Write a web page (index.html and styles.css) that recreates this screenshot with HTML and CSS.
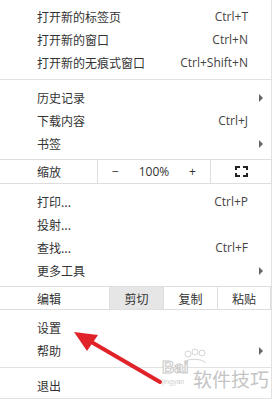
FILE: index.html
```html
<!DOCTYPE html>
<html lang="zh-CN">
<head>
    <meta charset="UTF-8">
    <meta name="viewport" content="width=device-width, initial-scale=1.0">
    <title>菜单</title>
    <link rel="stylesheet" href="styles.css">
</head>
<body>
    <div class="menu">
        <div class="group">
            <div class="item"><span class="label">打开新的标签页</span><span class="key">Ctrl+T</span></div>
            <div class="item"><span class="label">打开新的窗口</span><span class="key">Ctrl+N</span></div>
            <div class="item"><span class="label">打开新的无痕式窗口</span><span class="key">Ctrl+Shift+N</span></div>
        </div>
        <div class="sep"></div>
        <div class="group">
            <div class="item"><span class="label">历史记录</span><span class="sub"></span></div>
            <div class="item"><span class="label">下载内容</span><span class="key">Ctrl+J</span></div>
            <div class="item"><span class="label">书签</span><span class="sub"></span></div>
        </div>

        <!-- 缩放 -->
        <div class="box-row zoom-row">
            <div class="box-label">缩放</div>
            <div class="zoom-ctrl">
                <span>−</span>
                <span>100%</span>
                <span>+</span>
            </div>
            <div class="zoom-full">
                <svg width="13" height="11" viewBox="0 0 13 11">
                    <path d="M1 4V1h4M8 1h4v3M12 7v3H8M5 10H1V7" fill="none" stroke="#222" stroke-width="2"/>
                </svg>
            </div>
        </div>

        <div class="group">
            <div class="item"><span class="label">打印...</span><span class="key">Ctrl+P</span></div>
            <div class="item"><span class="label">投射...</span></div>
            <div class="item"><span class="label">查找...</span><span class="key">Ctrl+F</span></div>
            <div class="item"><span class="label">更多工具</span><span class="sub"></span></div>
        </div>

        <!-- 编辑 -->
        <div class="box-row edit-row">
            <div class="box-label edit-label">编辑</div>
            <div class="edit-btn active">剪切</div>
            <div class="edit-btn">复制</div>
            <div class="edit-btn">粘贴</div>
        </div>

        <div class="group">
            <div class="item"><span class="label">设置</span></div>
            <div class="item"><span class="label">帮助</span><span class="sub"></span></div>
        </div>
        <div class="sep"></div>
        <div class="group">
            <div class="item"><span class="label">退出</span></div>
        </div>
    </div>

    <!-- 水印 -->
    <div class="watermark">
        <svg class="paw" width="36" height="16" viewBox="0 0 36 16">
            <g fill="none" stroke="#d4d4d4" stroke-width="1">
                <circle cx="8" cy="6" r="3"/>
                <circle cx="15" cy="4" r="3"/>
                <circle cx="22" cy="5" r="3"/>
                <path d="M4 15c2-5 18-5 22 0"/>
            </g>
        </svg>
        <span class="bai">Bai</span>
        <span class="jy">jingyan</span>
        <span class="wm-text">软件技巧</span>
    </div>

    <!-- 红色箭头 -->
    <svg class="arrow" width="273" height="399" viewBox="0 0 273 399">
        <line x1="160" y1="382" x2="88" y2="340" stroke="#e02329" stroke-width="4" stroke-linecap="round"/>
        <polygon points="74,332 98,335 87,351" fill="#e02329"/>
    </svg>
</body>
</html>
```

FILE: styles.css
```css
body {
    margin: 0;
    width: 273px;
    height: 399px;
    overflow: hidden;
    background: #ffffff;
    font-family: "Noto Sans CJK SC", "Noto Sans", sans-serif;
    font-size: 12px;
    color: #333;
    position: relative;
}
.menu {
    width: 272px;
    box-sizing: border-box;
    padding-top: 5px;
    padding-bottom: 1px;
    border-right: 1px solid #e2e2e2;
    border-bottom: 1px solid #e2e2e2;
}
.item {
    height: 23px;
    display: flex;
    align-items: center;
    padding-left: 37px;
    padding-right: 8px;
}
.label {
    flex: 1;
}
.key {
    font-family: "Open Sans", "Noto Sans", sans-serif;
    color: #444;
    margin-right: 15px;
}
.sub {
    width: 0;
    height: 0;
    border-top: 4px solid transparent;
    border-bottom: 4px solid transparent;
    border-left: 4px solid #666;
}
.sep {
    height: 1px;
    background: #e2e2e2;
    margin: 5px 0 6px;
}
.box-row {
    display: flex;
    border-top: 1px solid #dedede;
    border-bottom: 1px solid #dedede;
    margin: 4px -1px 6px 0;
}
.zoom-row {
    height: 23px;
}
.edit-row {
    height: 22px;
}
.box-label {
    width: 97px;
    padding-left: 37px;
    box-sizing: border-box;
    display: flex;
    align-items: center;
}
.edit-label {
    width: 109px;
}
.zoom-ctrl {
    width: 113px;
    box-sizing: border-box;
    border-left: 1px solid #dedede;
    display: flex;
    align-items: center;
    justify-content: space-between;
    padding: 0 14px 0 14px;
    font-family: "Open Sans", "Noto Sans", sans-serif;
    color: #333;
}
.zoom-full {
    flex: 1;
    border-left: 1px solid #dedede;
    border-right: 1px solid #dedede;
    display: flex;
    align-items: center;
    justify-content: center;
}
.edit-btn {
    width: 54px;
    box-sizing: border-box;
    border-left: 1px solid #dedede;
    display: flex;
    align-items: center;
    justify-content: center;
}
.edit-btn:last-child {
    border-right: 1px solid #dedede;
}
.edit-btn.active {
    background: #e6e6e6;
}
.watermark {
    position: absolute;
    left: 156px;
    top: 348px;
    width: 117px;
    height: 48px;
}
.paw {
    position: absolute;
    left: 24px;
    top: 0;
}
.bai {
    position: absolute;
    left: 6px;
    top: 10px;
    font-family: "Liberation Sans", sans-serif;
    font-weight: bold;
    font-size: 17px;
    color: #fff;
    -webkit-text-stroke: 1px #c8c8c8;
}
.jy {
    position: absolute;
    left: 6px;
    top: 30px;
    font-family: "Liberation Sans", sans-serif;
    font-size: 7px;
    color: #d0d0d0;
}
.wm-text {
    position: absolute;
    left: 37px;
    top: 19px;
    font-size: 19px;
    line-height: 24px;
    color: #c4c4c4;
    white-space: nowrap;
}
.arrow {
    position: absolute;
    left: 0;
    top: 0;
    pointer-events: none;
}
```
